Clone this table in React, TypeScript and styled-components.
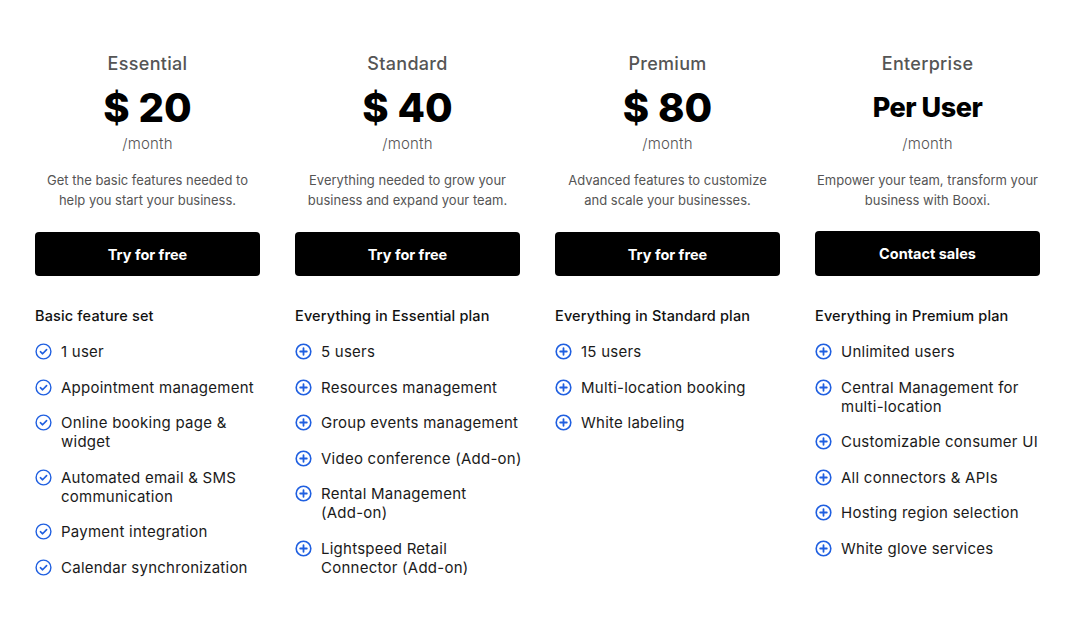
import React from "react";
import styled, { createGlobalStyle } from "styled-components";

const Global = createGlobalStyle`
  html, body { margin: 0; padding: 0; background: #ffffff; }
  body { font-family: Inter, "Open Sans", sans-serif; color: #111; }
`;

const Page = styled.div`
  width: 1070px;
  height: 631px;
  box-sizing: border-box;
  padding: 52px 31px 0 35px;
  display: grid;
  grid-template-columns: repeat(4, 225px);
  column-gap: 35px;
  background: #fff;
`;

const Column = styled.div`
  display: flex;
  flex-direction: column;
`;

const Head = styled.div`
  display: flex;
  flex-direction: column;
  align-items: center;
  text-align: center;
`;

const PlanName = styled.div`
  font-size: 18px;
  font-weight: 500;
  color: #555;
  line-height: 24px;
  letter-spacing: 0.3px;
`;

const Price = styled.div<{ $small?: boolean }>`
  font-size: ${(p) => (p.$small ? "27px" : "40px")};
  font-weight: 800;
  color: #000;
  line-height: 44px;
  margin-top: 10px;
  letter-spacing: ${(p) => (p.$small ? "-0.5px" : "0")};
`;

const Period = styled.div`
  font-size: 15px;
  font-weight: 300;
  color: #555;
  line-height: 22px;
  margin-top: 3px;
  letter-spacing: 0.2px;
`;

const Desc = styled.div`
  font-size: 13px;
  font-weight: 400;
  color: #555;
  line-height: 19.5px;
  margin-top: 16px;
  min-height: 39px;
  white-space: nowrap;
`;

const Button = styled.button<{ $tall?: boolean }>`
  margin-top: ${(p) => (p.$tall ? "21px" : "22px")};
  height: ${(p) => (p.$tall ? "45px" : "44px")};
  width: 100%;
  border: none;
  border-radius: 4px;
  background: #000;
  color: #fff;
  font-family: inherit;
  font-size: 14.5px;
  font-weight: 700;
  cursor: pointer;
`;

const Features = styled.div`
  margin-top: 30px;
  display: flex;
  flex-direction: column;
`;

const FeatureHead = styled.div`
  font-size: 14.5px;
  font-weight: 500;
  color: #111;
  line-height: 20px;
  letter-spacing: 0.15px;
  margin-bottom: 16px;
  white-space: nowrap;
`;

const List = styled.ul`
  list-style: none;
  margin: 0;
  padding: 0;
  display: flex;
  flex-direction: column;
  gap: 16.5px;
`;

const Item = styled.li`
  display: flex;
  align-items: flex-start;
  gap: 9px;
  font-size: 15px;
  font-weight: 400;
  color: #1a1a1a;
  line-height: 19px;
  letter-spacing: 0.25px;
`;

const ItemText = styled.span`
  white-space: nowrap;
`;

const IconBox = styled.span`
  flex: 0 0 17px;
  width: 17px;
  height: 19px;
  display: flex;
  align-items: center;
  justify-content: center;
`;

const CheckIcon = () => (
  <svg width="17" height="17" viewBox="0 0 17 17" fill="none">
    <circle cx="8.5" cy="8.5" r="7.4" stroke="#1f5fe0" strokeWidth="1.4" />
    <path d="M5.4 8.7 L7.6 10.8 L11.6 6.6" stroke="#1f5fe0" strokeWidth="1.6" strokeLinecap="round" strokeLinejoin="round" />
  </svg>
);

const PlusIcon = () => (
  <svg width="17" height="17" viewBox="0 0 17 17" fill="none">
    <circle cx="8.5" cy="8.5" r="7.3" stroke="#1f5fe0" strokeWidth="1.6" />
    <path d="M8.5 5.2 V11.8 M5.2 8.5 H11.8" stroke="#1f5fe0" strokeWidth="1.8" strokeLinecap="round" />
  </svg>
);

type Plan = {
  name: string;
  price: string;
  small?: boolean;
  desc: [string, string];
  cta: string;
  heading: string;
  icon: "check" | "plus";
  items: string[][];
};

const plans: Plan[] = [
  {
    name: "Essential",
    price: "$ 20",
    desc: ["Get the basic features needed to", "help you start your business."],
    cta: "Try for free",
    heading: "Basic feature set",
    icon: "check",
    items: [
      ["1 user"],
      ["Appointment management"],
      ["Online booking page &", "widget"],
      ["Automated email & SMS", "communication"],
      ["Payment integration"],
      ["Calendar synchronization"],
    ],
  },
  {
    name: "Standard",
    price: "$ 40",
    desc: ["Everything needed to grow your", "business and expand your team."],
    cta: "Try for free",
    heading: "Everything in Essential plan",
    icon: "plus",
    items: [
      ["5 users"],
      ["Resources management"],
      ["Group events management"],
      ["Video conference (Add-on)"],
      ["Rental Management", "(Add-on)"],
      ["Lightspeed Retail", "Connector (Add-on)"],
    ],
  },
  {
    name: "Premium",
    price: "$ 80",
    desc: ["Advanced features to customize", "and scale your businesses."],
    cta: "Try for free",
    heading: "Everything in Standard plan",
    icon: "plus",
    items: [["15 users"], ["Multi-location booking"], ["White labeling"]],
  },
  {
    name: "Enterprise",
    price: "Per User",
    small: true,
    desc: ["Empower your team, transform your", "business with Booxi."],
    cta: "Contact sales",
    heading: "Everything in Premium plan",
    icon: "plus",
    items: [
      ["Unlimited users"],
      ["Central Management for", "multi-location"],
      ["Customizable consumer UI"],
      ["All connectors & APIs"],
      ["Hosting region selection"],
      ["White glove services"],
    ],
  },
];

export default function App() {
  return (
    <>
      <Global />
      <Page>
        {plans.map((p) => (
          <Column key={p.name}>
            <Head>
              <PlanName>{p.name}</PlanName>
              <Price $small={p.small}>{p.price}</Price>
              <Period>/month</Period>
              <Desc>
                {p.desc[0]}
                <br />
                {p.desc[1]}
              </Desc>
            </Head>
            <Button $tall={p.small}>{p.cta}</Button>
            <Features>
              <FeatureHead>{p.heading}</FeatureHead>
              <List>
                {p.items.map((lines, i) => (
                  <Item key={i}>
                    <IconBox>{p.icon === "check" ? <CheckIcon /> : <PlusIcon />}</IconBox>
                    <ItemText>
                      {lines.map((l, j) => (
                        <React.Fragment key={j}>
                          {j > 0 && <br />}
                          {l}
                        </React.Fragment>
                      ))}
                    </ItemText>
                  </Item>
                ))}
              </List>
            </Features>
          </Column>
        ))}
      </Page>
    </>
  );
}
